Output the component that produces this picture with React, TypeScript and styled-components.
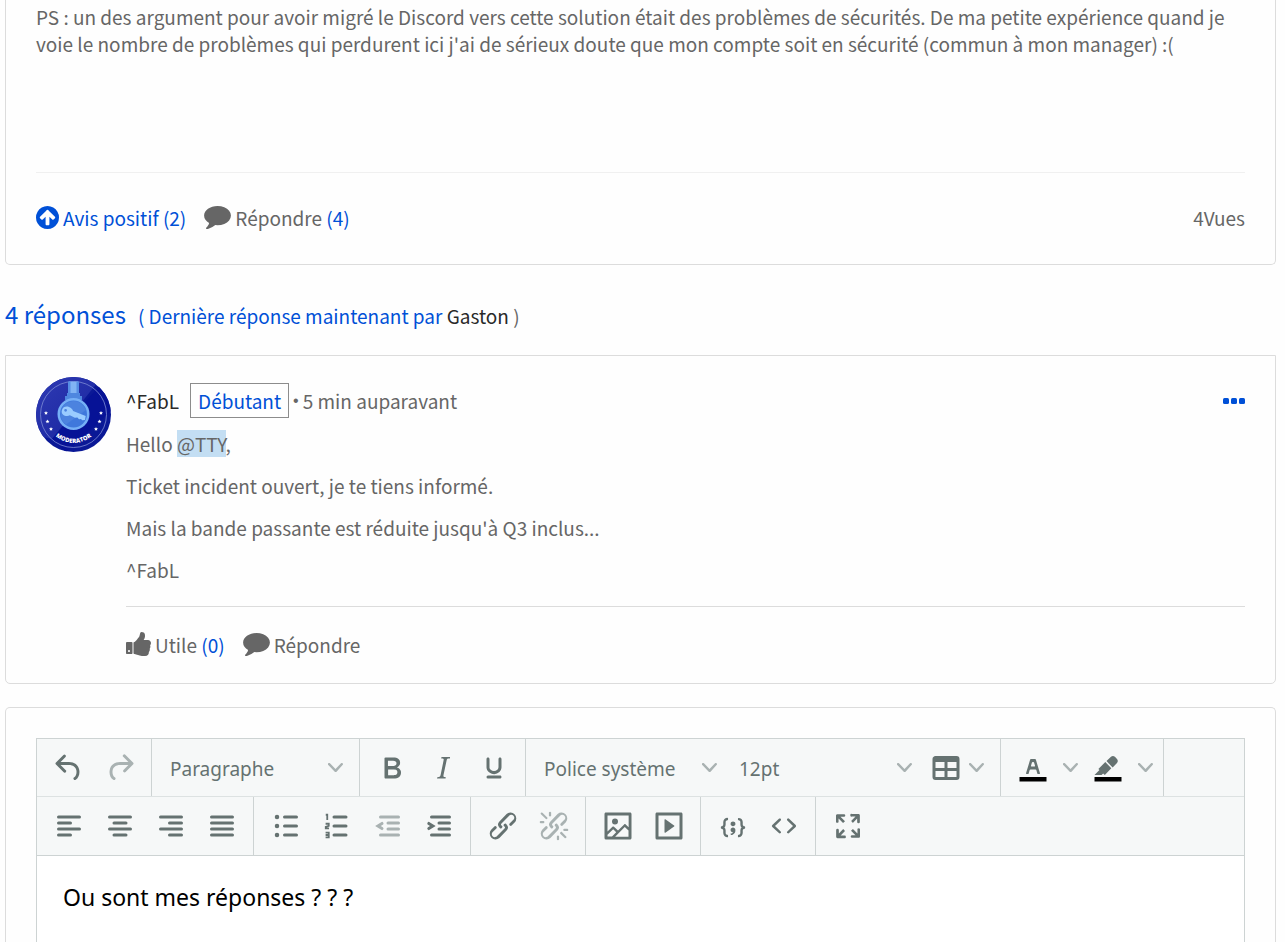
import React from "react";
import styled, { createGlobalStyle } from "styled-components";

const blue = "#0050d7";
const grey = "#666666";
const icon = "#657271";
const line = "#cdd3d3";

const GlobalStyle = createGlobalStyle`
  * { box-sizing: border-box; }
  body {
    margin: 0;
    background: #fefefe;
    color: ${grey};
    font-family: "Noto Sans CJK SC", "Noto Sans", sans-serif;
    font-size: 19px;
    line-height: 27px;
  }
  p { margin: 0; }
  button, select, textarea { font: inherit; color: inherit; }
  svg { display: block; flex: none; }
`;

const Page = styled.main`
  min-height: 100vh;
  display: flex;
  flex-direction: column;
  padding: 0 9px 0 5px;
`;

const PostCard = styled.article`
  border: 1px solid #dcdcdc;
  border-top: 0;
  border-radius: 0 0 5px 5px;
  padding: 3px 30px 0;
`;

const PostBody = styled.p`
  min-height: 170px;
  border-bottom: 1px solid #f0f0f0;
`;

const PostFooter = styled.footer`
  height: 91px;
  display: flex;
  align-items: center;
  justify-content: space-between;
  padding-bottom: 3px;
`;

const Actions = styled.div`
  display: flex;
  align-items: center;
  gap: 18px;
`;

const Action = styled.button<{ $active?: boolean }>`
  display: flex;
  align-items: center;
  gap: 4px;
  padding: 0;
  border: 0;
  background: none;
  white-space: pre;
  color: ${(p) => (p.$active ? blue : grey)};
`;

const Count = styled.span`
  color: ${blue};
`;

const RepliesHeading = styled.div`
  display: flex;
  align-items: baseline;
  gap: 12px;
  height: 90px;
  padding-top: 31px;
`;

const RepliesTitle = styled.h2`
  margin: 0;
  font-size: 24px;
  line-height: 36px;
  font-weight: 400;
  color: ${blue};
`;

const Author = styled.a`
  color: #292929;
  text-decoration: none;
`;

const ReplyCard = styled.article`
  display: flex;
  gap: 15px;
  padding: 21px 30px 0;
  border: 1px solid #dcdcdc;
  border-radius: 0 0 5px 5px;
  margin-bottom: 23px;
`;

const ReplyMain = styled.div`
  flex: 1;
  display: flex;
  flex-direction: column;
`;

const ReplyHeader = styled.header`
  display: flex;
  align-items: center;
  height: 46px;
`;

const Rank = styled.span`
  margin: 0 4px 0 11px;
  padding: 3px 7px;
  border: 1px solid #8c8c8c;
  color: ${blue};
`;

const Posted = styled.span`
  display: flex;
  gap: 4px;
`;

const Bullet = styled.span`
  font-family: "Liberation Sans", sans-serif;
  font-size: 16px;
`;

const MoreButton = styled.button`
  margin-left: auto;
  padding: 2px 0 0;
  border: 0;
  background: none;
  color: ${blue};
`;

const ReplyBody = styled.div`
  display: flex;
  flex-direction: column;
  gap: 15px;
  padding: 7px 0 23px;
  border-bottom: 1px solid #dcdcdc;
`;

const Mention = styled.span`
  background: #c3def3;
`;

const ReplyFooter = styled.footer`
  display: flex;
  align-items: center;
  height: 76px;
  padding-bottom: 2px;
`;

const EditorCard = styled.section`
  flex: 1;
  display: flex;
  padding: 30px 30px 0;
  border: 1px solid #dcdcdc;
  border-bottom: 0;
  border-radius: 5px 5px 0 0;
`;

const Editor = styled.div`
  flex: 1;
  display: flex;
  flex-direction: column;
  border: 1px solid ${line};
  border-bottom: 0;
  font-family: "Noto Sans", "Open Sans", sans-serif;
  color: ${icon};
`;

const ToolbarRow = styled.div`
  display: flex;
  height: 58px;
  background: #f6f8f8;
  border-bottom: 1px solid #dde2e2;
  &:nth-child(2) {
    height: 59px;
    border-color: ${line};
  }
`;

const Group = styled.div<{ $open?: boolean }>`
  display: flex;
  align-items: center;
  padding: 0 6px;
  border-right: ${(p) => (p.$open ? 0 : 1)}px solid ${line};
`;

const ToolButton = styled.button<{ $wide?: boolean }>`
  display: flex;
  align-items: center;
  justify-content: ${(p) => (p.$wide ? "space-between" : "center")};
  width: ${(p) => (p.$wide ? 72 : 51)}px;
  height: 51px;
  padding: ${(p) => (p.$wide ? "0 10px 0 6px" : "0")};
  border: 0;
  background: none;
  color: ${icon};
  &:disabled { color: #a9b2b2; }
`;

const ArrowButton = styled.button`
  display: flex;
  align-items: center;
  justify-content: center;
  width: 24px;
  height: 51px;
  padding: 0;
  border: 0;
  background: none;
`;

const SelectBox = styled.div`
  display: grid;
  align-items: center;
  width: 195px;
  > * { grid-area: 1 / 1; }
  > svg {
    justify-self: end;
    margin-right: 10px;
    pointer-events: none;
  }
`;

const Select = styled.select`
  appearance: none;
  width: 100%;
  height: 51px;
  padding: 3px 0 0 12px;
  border: 0;
  background: none;
`;

const Content = styled.textarea`
  flex: 1;
  min-height: 80px;
  padding: 23px 26px 0;
  border: 0;
  outline: 0;
  resize: none;
  background: #fff;
  color: #000;
  font-size: 23px;
  line-height: 36px;
`;

const UpIcon = () => (
  <svg width="23" height="23" viewBox="128 128 1536 1536" fill="currentColor" aria-hidden="true">
    <path d="M1412 897q0-27-18-45l-362-362-91-91q-18-18-45-18t-45 18l-91 91-362 362q-18 18-18 45t18 45l91 91q18 18 45 18t45-18l189-189v502q0 26 19 45t45 19h128q26 0 45-19t19-45v-502l189 189q19 19 45 19t45-19l91-91q18-18 18-45zm252-1q0 209-103 385.5t-279.5 279.5-385.5 103-385.5-103-279.5-279.5-103-385.5 103-385.5 279.5-279.5 385.5-103 385.5 103 279.5 279.5 103 385.5z" />
  </svg>
);

const CommentIcon = () => (
  <svg width="27" height="23" viewBox="0 256 1792 1536" fill="currentColor" aria-hidden="true">
    <path d="M1792 896q0 174-120 321.5t-326 233-450 85.5q-70 0-145-8-198 175-460 242-49 14-114 22-17 2-30.5-9t-17.5-29v-1q-3-4-.5-12t2-10 4.5-9.5l6-9 7-8.5 8-9q7-8 31-34.5t34.5-38 31-39.5 32.5-51 27-59 26-76q-157-89-247.5-220t-90.5-281q0-130 71-248.5t191-204.5 286-136.5 348-50.5q244 0 450 85.5t326 233 120 321.5z" />
  </svg>
);

const ThumbIcon = () => (
  <svg width="25" height="24" viewBox="64 128 1600 1536" fill="currentColor" aria-hidden="true">
    <path d="M320 1344q0-26-19-45t-45-19q-27 0-45.5 19t-18.5 45q0 27 18.5 45.5t45.5 18.5q26 0 45-18.5t19-45.5zm160-512v640q0 26-19 45t-45 19h-288q-26 0-45-19t-19-45v-640q0-26 19-45t45-19h288q26 0 45 19t19 45zm1184 0q0 86-55 149 15 44 15 76 3 76-43 137 17 56 0 117-15 57-54 94 9 112-49 181-64 76-197 78h-129q-66 0-144-15.5t-121.5-29-120.5-39.5q-123-43-158-44-26-1-45-19.5t-19-44.5v-641q0-25 18-43.5t43-20.5q24-2 76-59t101-121q68-87 101-120 18-18 31-48t17.5-48.5 13.5-60.5q7-39 12.5-61t19.5-52 34-50q19-19 45-19 46 0 82.5 10.5t60 26 40 40.5 24 45 12 50 5 45 .5 39q0 38-9.5 76t-19 60-27.5 56q-3 6-10 18t-11 22-8 24h277q78 0 135 57t57 135z" />
  </svg>
);

const DotsIcon = () => (
  <svg width="22" height="6" viewBox="0 0 22 6" fill="currentColor" aria-hidden="true">
    <rect width="6" height="6" rx="1.5" />
    <rect x="8" width="6" height="6" rx="1.5" />
    <rect x="16" width="6" height="6" rx="1.5" />
  </svg>
);

const star = "M0-2 .6-.7 2-.6.9.4 1.2 1.8 0 1.1-1.2 1.8-.9.4-2-.6-.6-.7z";
const stars = [[10, 36], [11.5, 44.5], [15, 52], [65, 36], [63.5, 44.5], [60, 52]];

const Avatar = () => (
  <svg width="75" height="75" viewBox="0 0 75 75" role="img" aria-label="Moderator">
    <defs>
      <clipPath id="disc"><circle cx="37.5" cy="37.5" r="37.5" /></clipPath>
      <linearGradient id="sheen" x1="0" y1="0" x2="1" y2="1">
        <stop offset="0" stopColor="#2f3bb4" />
        <stop offset="1" stopColor="#16229c" />
      </linearGradient>
      <path id="arc" d="M14 55Q37.5 77 61 55" />
    </defs>
    <g clipPath="url(#disc)">
      <rect width="75" height="75" fill="#0a1896" />
      <path d="M0 0H66L16 62 0 58z" fill="url(#sheen)" />
      <path d="M66 6 75 14V34L30 75 16 62z" fill="#061296" />
    </g>
    <circle cx="37.5" cy="37.5" r="33" fill="none" stroke="#7d8bd4" strokeWidth=".8" />
    <path d="M33 4.5h9V18h-9z" fill="#81b4f4" />
    <path d="M32 4.5h2.5V18H32zM40.5 4.5H43V18h-2.5z" fill="#568ee4" />
    <path d="M31 16h13v3h2v4H29v-4h2z" fill="#4e87df" />
    <circle cx="37.5" cy="37" r="16" fill="#76b0f6" />
    <circle cx="37.5" cy="37" r="13.5" fill="#3f78dc" />
    <path d="M37.5 24a13 13 0 0 1 12.5 9L30 47.5A13 13 0 0 1 37.5 24z" fill="#4c83df" />
    <path fillRule="evenodd" d="M26 33c.7-3.100 4.100-4.100 7-3.100 2.300.8 3.600 2.200 4.100 4l12.600 5.200-.7 3.800-2.800.4-1.200-1.400-2 .4-1.600-1.900-2.500.3-5-2.400c-2.200 1.400-5.300.9-7-.9-1.300-1.300-1.400-2.800-.9-4.400zm2.200.3a1.400 1.400 0 1 0 2.800 0 1.400 1.400 0 0 0-2.800 0z" fill="#9accff" />
    {stars.map(([x, y]) => (
      <path key={`${x}-${y}`} d={star} transform={`translate(${x} ${y})`} fill="#fff" />
    ))}
    <text fill="#fff" fontFamily="Open Sans, sans-serif" fontWeight="800" fontSize="6" textAnchor="middle">
      <textPath href="#arc" startOffset="50%">MODERATOR</textPath>
    </text>
  </svg>
);

const Chevron = () => (
  <svg width="15" height="15" viewBox="0 0 10 10" fill="#a9b2b2" aria-hidden="true">
    <path d="M8.7 2.2c.3-.3.8-.3 1 0 .4.4.4.9 0 1.2L5.7 7.8c-.3.3-.9.3-1.2 0L.2 3.4a.8.8 0 0 1 0-1.2c.3-.3.8-.3 1.1 0L5 6l3.7-3.8z" />
  </svg>
);

const Glyph = ({ d, children }: { d?: string; children?: React.ReactNode }) => (
  <svg width="36" height="36" viewBox="0 0 24 24" fill="currentColor" aria-hidden="true">
    {d && <path fillRule="evenodd" d={d} />}
    {children}
  </svg>
);

const Bars = ({ d, children }: { d: string; children?: React.ReactNode }) => (
  <Glyph>
    <path d={d} fill="none" stroke="currentColor" strokeWidth="2" strokeLinecap="round" />
    {children}
  </Glyph>
);

const linkPath =
  "M6.2 12.3a1 1 0 0 1 1.4 1.4l-2.1 2a2 2 0 1 0 2.7 2.8l4.8-4.8a1 1 0 0 0 0-1.4 1 1 0 1 1 1.4-1.3 2.9 2.9 0 0 1 0 4L9.6 20a3.9 3.9 0 0 1-5.5-5.5l2-2zm11.6-.6a1 1 0 0 1-1.4-1.4l2-2a2 2 0 1 0-2.6-2.8L11 10.3a1 1 0 0 0 0 1.4A1 1 0 1 1 9.6 13a2.9 2.9 0 0 1 0-4L14.4 4a3.9 3.9 0 0 1 5.5 5.5l-2 2z";

const paths = {
  undo: "M6.4 8H12c3.7 0 6.2 2 6.8 5.1.6 2.7-.4 5.6-2.3 6.8a1 1 0 0 1-1-1.8c1.1-.6 1.8-2.7 1.4-4.6-.5-2.1-2.1-3.5-4.9-3.5H6.4l3.3 3.3a1 1 0 1 1-1.4 1.4l-5-5a1 1 0 0 1 0-1.4l5-5a1 1 0 0 1 1.4 1.4L6.4 8z",
  redo: "M17.6 10H12c-2.8 0-4.4 1.4-4.9 3.5-.4 2 .3 4 1.4 4.6a1 1 0 1 1-1 1.8c-2-1.2-2.9-4.1-2.3-6.8.6-3 3-5.1 6.8-5.1h5.6l-3.3-3.3a1 1 0 1 1 1.4-1.4l5 5a1 1 0 0 1 0 1.4l-5 5a1 1 0 0 1-1.4-1.4l3.3-3.3z",
  bold: "M7.8 19c-.3 0-.5 0-.6-.2l-.2-.5V5.7c0-.2 0-.4.2-.5l.6-.2h5c1.5 0 2.7.3 3.5 1 .7.6 1.1 1.4 1.1 2.5a3 3 0 0 1-.6 1.9c-.4.6-1 1-1.6 1.2.4.1.9.3 1.3.6s.8.7 1 1.2c.4.4.5 1 .5 1.6 0 1.3-.4 2.3-1.3 3-.8.7-2.1 1-3.8 1H7.8zm5-8.3c.6 0 1.2-.1 1.6-.5.4-.3.6-.7.6-1.3 0-1.1-.8-1.7-2.3-1.7H9.3v3.5h3.4zm.5 6c.7 0 1.3-.1 1.7-.4.4-.4.6-.9.6-1.5s-.2-1-.7-1.4c-.4-.3-1-.4-2-.4H9.4v3.8h4z",
  italic: "M16.7 4.7l-.1.9h-.3c-.6 0-1 0-1.4.3-.3.3-.4.6-.5 1.1l-2.1 9.8v.6c0 .5.4.8 1.4.8h.2l-.2.8H8l.2-.8h.2c1.1 0 1.8-.5 2-1.5l2-9.8.1-.5c0-.6-.4-.8-1.4-.8h-.3l.2-.9h5.8z",
  underline: "M16 5c.6 0 1 .4 1 1v5.5a4 4 0 0 1-.4 1.8l-1 1.4a5.3 5.3 0 0 1-5.5 1 5 5 0 0 1-1.6-1c-.5-.4-.8-.9-1.1-1.4a4 4 0 0 1-.4-1.8V6c0-.6.4-1 1-1s1 .4 1 1v5.5c0 .3 0 .6.2 1l.6.7a3.3 3.3 0 0 0 2.2.8 3.4 3.4 0 0 0 2.2-.8c.3-.2.4-.5.6-.8l.2-.9V6c0-.6.4-1 1-1zM8 17h8c.6 0 1 .4 1 1s-.4 1-1 1H8a1 1 0 0 1 0-2z",
  table: "M19 4a2 2 0 0 1 2 2v12a2 2 0 0 1-2 2H5a2 2 0 0 1-2-2V6c0-1.1.9-2 2-2h14zM5 14v4h6v-4H5zm14 0h-6v4h6v-4zm0-6h-6v4h6V8zM5 12h6V8H5v4z",
  color: "M8.7 16h-.8a.5.5 0 0 1-.5-.6l2.7-9c.1-.3.3-.4.5-.4h2.8c.2 0 .4.1.5.4l2.7 9a.5.5 0 0 1-.5.6h-.8a.5.5 0 0 1-.4-.4l-.7-2.2c0-.3-.3-.4-.5-.4h-3.4c-.2 0-.4.1-.5.4l-.7 2.2c0 .3-.2.4-.4.4zm2.6-7.6l-.6 2a.5.5 0 0 0 .5.6h1.6a.5.5 0 0 0 .5-.6l-.6-2c0-.3-.3-.4-.5-.4h-.4c-.2 0-.4.1-.5.4z",
  highlight: "M7.7 16.7H3l3.3-3.3-.7-.8L10.2 8l4 4.1-4 4.2c-.2.2-.6.2-.8 0l-.6-.7-1.1 1.1zm5-7.5L11 7.4l3-2.9a2 2 0 0 1 2.6 0L18 6c.7.7.7 2 0 2.7l-2.9 2.9-1.8-1.8-.5-.6",
  unlink: linkPath + "M7.6 6.3a.8.8 0 0 1-1 1.1L3.3 4.2a.7.7 0 1 1 1-1l3.2 3.1zM5.1 8.6a.8.8 0 0 1 0 1.5H3a.8.8 0 0 1 0-1.5H5zm5-3.5a.8.8 0 0 1-1.5 0V3a.8.8 0 0 1 1.5 0V5zm6 11.8a.8.8 0 0 1 1-1l3.2 3.2a.8.8 0 0 1-1 1L16 17zm-2.2 2a.8.8 0 0 1 1.5 0V21a.8.8 0 0 1-1.5 0V19zm5-3.5a.7.7 0 1 1 0-1.5H21a.8.8 0 0 1 0 1.5H19z",
  image: "M5 15.7l3.3-3.2c.3-.3.7-.3 1 0L12 15l4.1-4c.3-.4.8-.4 1 0l2 1.9V5H5v10.7zM5 18V19h3l2.8-2.9-2-2L5 17.9zm14-3l-2.5-2.4-6.4 6.5H19v-4zM4 3h16c.6 0 1 .4 1 1v16c0 .6-.4 1-1 1H4a1 1 0 0 1-1-1V4c0-.6.4-1 1-1zm6 8a2 2 0 1 0 0-4 2 2 0 0 0 0 4z",
  media: "M4 3h16c.6 0 1 .4 1 1v16c0 .6-.4 1-1 1H4a1 1 0 0 1-1-1V4c0-.6.4-1 1-1zm1 2v14h14V5H5zm4.8 2.6l5.6 4a.5.5 0 0 1 0 .8l-5.6 4A.5.5 0 0 1 9 16V8a.5.5 0 0 1 .8-.4z",
  sample: "M7.1 11a2.8 2.8 0 0 1-.8 2 2.8 2.8 0 0 1 .8 2v1.7c0 .3.1.6.4.8.2.3.5.4.8.4.3 0 .4.2.4.4v.8c0 .2-.1.4-.4.4-.7 0-1.4-.3-2-.8-.5-.6-.8-1.3-.8-2V15c0-.3-.1-.6-.4-.8-.2-.3-.5-.4-.8-.4a.4.4 0 0 1-.4-.4v-.8c0-.2.2-.4.4-.4.3 0 .6-.1.8-.4.3-.2.4-.5.4-.8V9.3c0-.7.3-1.4.8-2 .6-.5 1.3-.8 2-.8.3 0 .4.2.4.4v.8c0 .2-.1.4-.4.4-.3 0-.6.1-.8.4-.3.2-.4.5-.4.8V11zm9.8 0V9.3c0-.3-.1-.6-.4-.8-.2-.3-.5-.4-.8-.4a.4.4 0 0 1-.4-.4V7c0-.2.1-.4.4-.4.7 0 1.4.3 2 .8.5.6.8 1.3.8 2V11c0 .3.1.6.4.8.2.3.5.4.8.4.2 0 .4.2.4.4v.8c0 .2-.2.4-.4.4-.3 0-.6.1-.8.4-.3.2-.4.5-.4.8v1.7c0 .7-.3 1.4-.8 2-.6.5-1.3.8-2 .8a.4.4 0 0 1-.4-.4v-.8c0-.2.1-.4.4-.4.3 0 .6-.1.8-.4.3-.2.4-.5.4-.8V15a2.8 2.8 0 0 1 .8-2 2.8 2.8 0 0 1-.8-2zm-3.3-.4c0 .4-.1.8-.5 1.1-.3.3-.7.5-1.1.5-.4 0-.8-.2-1.1-.5-.4-.3-.5-.7-.5-1.1 0-.5.1-.9.5-1.2.3-.3.7-.4 1.1-.4.4 0 .8.1 1.1.4.4.3.5.7.5 1.2zM12 13c.4 0 .8.1 1.1.5.4.3.5.7.5 1.1 0 1-.1 1.6-.5 2a3 3 0 0 1-1.1 1c-.4.3-.8.4-1.1.4a.5.5 0 0 1-.5-.5V17a3 3 0 0 0 1-.2l.6-.6c-.6 0-1-.2-1.3-.5-.2-.3-.3-.7-.3-1 0-.5.1-1 .5-1.2.3-.4.7-.5 1.1-.5z",
  code: "M9.8 15.7c.3.3.3.8 0 1-.3.4-.9.4-1.2 0l-4.4-4.1a.8.8 0 0 1 0-1.2l4.4-4.2c.3-.3.9-.3 1.2 0 .3.3.3.8 0 1.1L6 12l3.8 3.7zM14.2 15.7c-.3.3-.3.8 0 1 .4.4.9.4 1.2 0l4.4-4.1c.3-.3.3-.9 0-1.2l-4.4-4.2a.8.8 0 0 0-1.2 0c-.3.3-.3.8 0 1.1L18 12l-3.8 3.7z",
  full: "M15.3 10l-1.2-1.3 2.9-3h-2.3a.9.9 0 1 1 0-1.7H19c.5 0 .9.4.9.9v4.4a.9.9 0 1 1-1.8 0V7l-2.9 3zm0 4l3 3v-2.3a.9.9 0 1 1 1.7 0V19c0 .5-.4.9-.9.9h-4.4a.9.9 0 1 1 0-1.8H17l-3-2.9 1.3-1.2zM10 15.4l-2.9 3h2.3a.9.9 0 1 1 0 1.7H5a.9.9 0 0 1-.9-.9v-4.4a.9.9 0 1 1 1.8 0V17l2.9-3 1.2 1.3zM8.7 10L5.7 7v2.3a.9.9 0 0 1-1.7 0V5c0-.5.4-.9.9-.9h4.4a.9.9 0 0 1 0 1.8H7l3 2.9-1.3 1.2z",
};

const aligns = [
  { label: "Aligner à gauche", d: "M5 6h14M5 10h8M5 14h14M5 18h8" },
  { label: "Centrer", d: "M5 6h14M8 10h8M5 14h14M8 18h8" },
  { label: "Aligner à droite", d: "M5 6h14M11 10h8M5 14h14M11 18h8" },
  { label: "Justifier", d: "M5 6h14M5 10h14M5 14h14M5 18h14" },
];

const Tool = ({ label, disabled, children }: { label: string; disabled?: boolean; children: React.ReactNode }) => (
  <ToolButton type="button" aria-label={label} disabled={disabled}>{children}</ToolButton>
);

const PickList = ({ label, value }: { label: string; value: string }) => (
  <SelectBox>
    <Select aria-label={label} defaultValue={value}>
      <option>{value}</option>
    </Select>
    <Chevron />
  </SelectBox>
);

const ColorTool = ({ label, d }: { label: string; d: string }) => (
  <>
    <Tool label={label}>
      <Glyph d={d}><path d="M3 18h18v3H3z" fill="#000" /></Glyph>
    </Tool>
    <ArrowButton type="button" aria-label={`${label} : options`}><Chevron /></ArrowButton>
  </>
);

const indentBars = "M7 6h12M12 10h7M12 14h7M7 18h12";

export default function App() {
  return (
    <>
      <GlobalStyle />
      <Page>
        <PostCard>
          <PostBody>
            PS : un des argument pour avoir migré le Discord vers cette solution était des problèmes de sécurités. De ma petite expérience quand je voie le nombre de problèmes qui perdurent ici j'ai de sérieux doute que mon compte soit en sécurité (commun à mon manager) :(
          </PostBody>
          <PostFooter>
            <Actions>
              <Action type="button" $active><UpIcon />Avis positif (2)</Action>
              <Action type="button"><CommentIcon /><span>Répondre <Count>(4)</Count></span></Action>
            </Actions>
            <span>4Vues</span>
          </PostFooter>
        </PostCard>

        <RepliesHeading>
          <RepliesTitle>4 réponses</RepliesTitle>
          <span><Count>( Dernière réponse maintenant par</Count> <Author href="#gaston">Gaston</Author> )</span>
        </RepliesHeading>

        <ReplyCard>
          <Avatar />
          <ReplyMain>
            <ReplyHeader>
              <Author href="#fabl">^FabL</Author>
              <Rank>Débutant</Rank>
              <Posted><Bullet>•</Bullet>5 min auparavant</Posted>
              <MoreButton type="button" aria-label="Plus d'options"><DotsIcon /></MoreButton>
            </ReplyHeader>
            <ReplyBody>
              <p>Hello <Mention>@TTY</Mention>,</p>
              <p>Ticket incident ouvert, je te tiens informé.</p>
              <p>Mais la bande passante est réduite jusqu'à Q3 inclus...</p>
              <p>^FabL</p>
            </ReplyBody>
            <ReplyFooter>
              <Actions>
                <Action type="button"><ThumbIcon /><span>Utile <Count>(0)</Count></span></Action>
                <Action type="button"><CommentIcon />Répondre</Action>
              </Actions>
            </ReplyFooter>
          </ReplyMain>
        </ReplyCard>

        <EditorCard>
          <Editor>
            <ToolbarRow>
              <Group>
                <Tool label="Annuler"><Glyph d={paths.undo} /></Tool>
                <Tool label="Rétablir" disabled><Glyph d={paths.redo} /></Tool>
              </Group>
              <Group><PickList label="Bloc" value="Paragraphe" /></Group>
              <Group>
                <Tool label="Gras"><Glyph d={paths.bold} /></Tool>
                <Tool label="Italique"><Glyph d={paths.italic} /></Tool>
                <Tool label="Souligné"><Glyph d={paths.underline} /></Tool>
              </Group>
              <Group>
                <PickList label="Police" value="Police système" />
                <PickList label="Taille" value="12pt" />
                <ToolButton type="button" aria-label="Tableau" $wide>
                  <Glyph d={paths.table} />
                  <Chevron />
                </ToolButton>
              </Group>
              <Group>
                <ColorTool label="Couleur du texte" d={paths.color} />
                <ColorTool label="Surlignage" d={paths.highlight} />
              </Group>
            </ToolbarRow>
            <ToolbarRow>
              <Group>
                {aligns.map((a) => (
                  <Tool key={a.label} label={a.label}><Bars d={a.d} /></Tool>
                ))}
              </Group>
              <Group>
                <Tool label="Liste à puces">
                  <Bars d="M11 6h8M11 12h8M11 18h8">
                    <circle cx="6" cy="6" r="1.5" /><circle cx="6" cy="12" r="1.5" /><circle cx="6" cy="18" r="1.5" />
                  </Bars>
                </Tool>
                <Tool label="Liste numérotée">
                  <Bars d="M10 6h8M10 12h8M10 18h8">
                    <path d="M4.5 4.5h1V8M4.4 10.5h2.1v1.4l-2 .7v1h2.2M4.4 16.4h2.1v3.2H4.4M4.4 18h2" fill="none" stroke="currentColor" strokeWidth="1.2" />
                  </Bars>
                </Tool>
                <Tool label="Diminuer le retrait" disabled>
                  <Bars d={indentBars + "M8 10.3L5.3 12 8 13.7"} />
                </Tool>
                <Tool label="Augmenter le retrait">
                  <Bars d={indentBars + "M5.2 10.3L7.9 12 5.2 13.7"} />
                </Tool>
              </Group>
              <Group>
                <Tool label="Lien"><Glyph d={linkPath} /></Tool>
                <Tool label="Supprimer le lien" disabled><Glyph d={paths.unlink} /></Tool>
              </Group>
              <Group>
                <Tool label="Image"><Glyph d={paths.image} /></Tool>
                <Tool label="Média"><Glyph d={paths.media} /></Tool>
              </Group>
              <Group>
                <Tool label="Exemple de code"><Glyph d={paths.sample} /></Tool>
                <Tool label="Code source"><Glyph d={paths.code} /></Tool>
              </Group>
              <Group $open>
                <Tool label="Plein écran"><Glyph d={paths.full} /></Tool>
              </Group>
            </ToolbarRow>
            <Content aria-label="Votre réponse" defaultValue="Ou sont mes réponses ? ? ?" />
          </Editor>
        </EditorCard>
      </Page>
    </>
  );
}
